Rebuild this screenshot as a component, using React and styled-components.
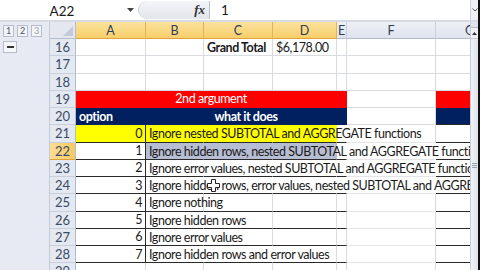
import React from "react";
import styled, { createGlobalStyle } from "styled-components";

const GlobalStyle = createGlobalStyle`
  html, body {
    margin: 0;
    padding: 0;
    background: #ffffff;
  }
  body {
    font-family: Lato, "Liberation Sans", sans-serif;
    font-size: 12.5px;
    letter-spacing: -0.45px;
    color: #1a1a1a;
  }
  * {
    box-sizing: border-box;
  }
`;

// row head, A, B, C, D, E, F, G (G runs on under the scroll bar)
const COLUMNS = "26px 70px 58px 69px 64px 10px 89px 68px";
const ROW_H = "17.25px";
const GRID = "#d8dbe0";
const DARK = "#2a2a2a";

const Window = styled.div`
  width: 480px;
  height: 270px;
  display: flex;
  overflow: hidden;
`;

const Main = styled.div`
  width: 478px;
  display: flex;
  flex-direction: column;
`;

const Edge = styled.div`
  width: 2px;
  background: #101010;
`;

const FormulaBar = styled.div`
  height: 20px;
  display: flex;
  align-items: center;
  background: #ffffff;
  font-size: 13.5px;
  letter-spacing: 0;
`;

const NameBox = styled.div`
  width: 124px;
  text-align: center;
  padding-top: 1px;
`;

const DropArrow = styled.div`
  width: 12px;
  display: flex;
  justify-content: center;
  svg {
    display: block;
  }
`;

const FxArea = styled.div`
  width: 72px;
  height: 18px;
  margin-left: 2px;
  display: flex;
  align-items: center;
  justify-content: flex-end;
  padding-right: 4px;
  border-radius: 9px 0 0 9px;
  background: linear-gradient(#f4f5f8, #e2e5ec);
  border-left: 1px solid #cfd4dd;
  border-right: 1px solid #b9bfca;
`;

const Fx = styled.span`
  font-family: "Liberation Serif", serif;
  font-style: italic;
  font-weight: bold;
  font-size: 13px;
  color: #333;
`;

const FormulaInput = styled.div`
  flex: 1;
  padding-left: 11px;
`;

const ExpandBtn = styled.div`
  width: 8px;
  height: 20px;
  display: flex;
  align-items: center;
  justify-content: center;
  background: #eef0f4;
  border-left: 1px solid #ccd1da;
`;

const Separator = styled.div`
  height: 2px;
  background: #d6dae2;
`;

const Sheet = styled.div`
  flex: 1;
  display: flex;
  overflow: hidden;
`;

const Outline = styled.div`
  width: 50px;
  background: #e7e9f3;
  border-right: 1px solid #c4c9d6;
  display: flex;
  flex-direction: column;
`;

const LevelBar = styled.div`
  height: 17px;
  display: flex;
  align-items: center;
  gap: 3px;
  padding-left: 3px;
`;

const LevelBtn = styled.div`
  width: 11px;
  height: 12px;
  border: 1px solid #b6bccb;
  background: #f3f4f8;
  font-size: 9px;
  letter-spacing: 0;
  line-height: 10px;
  text-align: center;
  color: ${(p) => (p.$dim ? "#9aa2b3" : "#4a5468")};
`;

const CollapseBtn = styled.div`
  width: 14px;
  height: 12px;
  margin: 2px 0 0 3px;
  border: 1px solid #b6bccb;
  background: #f6f7fa;
  display: flex;
  align-items: center;
  justify-content: center;
  &::before {
    content: "";
    width: 7px;
    height: 2px;
    background: #333;
  }
`;

const Grid = styled.div`
  width: 420px;
  display: flex;
  flex-direction: column;
  overflow: hidden;
`;

const HeaderRow = styled.div`
  display: grid;
  grid-template-columns: ${COLUMNS};
  height: 17px;
  flex-shrink: 0;
`;

const ColHead = styled.div`
  display: flex;
  align-items: center;
  justify-content: center;
  font-size: 12.5px;
  letter-spacing: 0;
  color: #2f3d52;
  white-space: nowrap;
  overflow: hidden;
  border-right: 1px solid ${(p) => (p.$on ? "#e0b45a" : "#c9cfdc")};
  border-bottom: 1px solid ${(p) => (p.$on ? "#e0a23a" : "#b4bccb")};
  background: ${(p) =>
    p.$on
      ? "linear-gradient(#fbe29e, #f7cf6a)"
      : "linear-gradient(#eef0f6, #dfe3ee)"};
`;

const Corner = styled.div`
  background: #e4e7ef;
  border-right: 1px solid #b4bccb;
  border-bottom: 1px solid #b4bccb;
  display: flex;
  align-items: flex-end;
  justify-content: flex-end;
  padding: 0 2px 2px 0;
`;

const Row = styled.div`
  display: grid;
  grid-template-columns: ${COLUMNS};
  grid-template-rows: ${ROW_H};
  height: ${ROW_H};
  flex-shrink: 0;
`;

const RowHead = styled.div`
  grid-column: 1;
  grid-row: 1;
  display: flex;
  align-items: center;
  padding-left: 5px;
  font-size: 13px;
  letter-spacing: 0;
  color: #3b4b66;
  background: ${(p) =>
    p.$on ? "linear-gradient(90deg, #fbdd94, #f5c963)" : "#e4e8f1"};
  border-right: 1px solid #b4bccb;
  border-bottom: 1px solid ${(p) => (p.$on ? "#e0a23a" : "#c9cfdc")};
`;

const Cell = styled.div`
  grid-column: ${(p) => p.$col} / span ${(p) => p.$span || 1};
  grid-row: 1;
  display: flex;
  align-items: center;
  justify-content: ${(p) =>
    p.$align === "right"
      ? "flex-end"
      : p.$align === "center"
      ? "center"
      : "flex-start"};
  padding: 0 ${(p) => p.$padR ?? 3}px 0 ${(p) => p.$padL ?? 3}px;
  background: ${(p) => p.$bg || "transparent"};
  color: ${(p) => p.$color || "#1a1a1a"};
  font-weight: ${(p) => (p.$bold ? 700 : 400)};
  white-space: nowrap;
  border-right: 1px solid ${(p) => p.$right || (p.$bg ? p.$bg : GRID)};
  border-bottom: 1px solid ${(p) => p.$bottom || (p.$bg ? p.$bg : GRID)};
`;

const Spill = styled.div`
  grid-column: ${(p) => p.$col} / -1;
  grid-row: 1;
  display: flex;
  align-items: center;
  padding-left: 3px;
  white-space: nowrap;
  overflow: hidden;
  color: #1a1a1a;
`;

const ScrollBar = styled.div`
  width: 8px;
  display: flex;
  flex-direction: column;
  background: #e9ebf1;
  border-left: 1px solid #c6cbd6;
`;

const ScrollTop = styled.div`
  height: 6px;
  background: #dfe3ec;
  border-bottom: 1px solid #b4bccb;
`;

const ScrollArrow = styled.div`
  height: 11px;
  display: flex;
  align-items: center;
  justify-content: center;
  background: #eef0f5;
  border-bottom: 1px solid #c6cbd6;
`;

const Thumb = styled.div`
  flex: 1;
  margin-top: 1px;
  background: linear-gradient(90deg, #f1f3f7, #dfe3ea);
  display: flex;
  align-items: center;
  justify-content: center;
  padding-top: 20px;
`;

const Grip = styled.div`
  width: 5px;
  height: 5px;
  border-top: 1px solid #9aa2b2;
  border-bottom: 1px solid #9aa2b2;
  background: linear-gradient(transparent 1px, #9aa2b2 1px, #9aa2b2 2px, transparent 2px);
`;

const Pointer = styled.svg`
  position: absolute;
  left: 207px;
  top: 179px;
`;

const ColLetters = ["A", "B", "C", "D", "E", "F", "G"];
const selectedCols = ["A", "B", "C", "D"];

// grid columns: 1 row head, 2 A, 3 B, 4 C, 5 D, 6 E, 7 F, 8 G
const options = [
  { n: 21, v: "0", text: "Ignore nested SUBTOTAL and AGGREGATE functions", fill: "#ffff00", spill: 8 },
  { n: 22, v: "1", text: "Ignore hidden rows, nested SUBTOTAL and AGGREGATE functions", fill: "#b7bdd3", spill: 9, active: true },
  { n: 23, v: "2", text: "Ignore error values, nested SUBTOTAL and AGGREGATE functions", spill: 9 },
  { n: 24, v: "3", text: "Ignore hidden rows, error values, nested SUBTOTAL and AGGREGATE functions", spill: 9 },
  { n: 25, v: "4", text: "Ignore nothing", spill: 4 },
  { n: 26, v: "5", text: "Ignore hidden rows", spill: 5 },
  { n: 27, v: "6", text: "Ignore error values", spill: 5 },
  { n: 28, v: "7", text: "Ignore hidden rows and error values", spill: 6 },
];

function OptionRow({ row }) {
  return (
    <Row>
      <RowHead $on={row.active}>{row.n}</RowHead>
      <Cell
        $col={2}
        $align="right"
        $bg={row.n === 21 ? "#ffff00" : undefined}
        $right={DARK}
        $bottom={DARK}
      >
        {row.v}
      </Cell>
      {[3, 4, 5, 6, 7, 8].map((c) => {
        const bg = row.fill && c <= 5 ? row.fill : undefined;
        let right = GRID;
        if (c < row.spill - 1 && c < 8) right = bg || "transparent";
        if (bg && c === 5) right = row.spill > 6 ? "transparent" : GRID;
        const bottom = c === 7 ? "#e4e5e8" : DARK;
        return <Cell key={c} $col={c} $bg={bg} $right={right} $bottom={bottom} />;
      })}
      <Spill $col={3}>{row.text}</Spill>
    </Row>
  );
}

function EmptyCells({ from = 2 }) {
  return [2, 3, 4, 5, 6, 7, 8]
    .filter((c) => c >= from)
    .map((c) => <Cell key={c} $col={c} />);
}

export default function App() {
  return (
    <>
      <GlobalStyle />
      <Window>
        <Main>
          <FormulaBar>
            <NameBox>A22</NameBox>
            <DropArrow>
              <svg width="7" height="4" viewBox="0 0 7 4">
                <path d="M0 0h7L3.5 4z" fill="#444" />
              </svg>
            </DropArrow>
            <FxArea>
              <Fx>fx</Fx>
            </FxArea>
            <FormulaInput>1</FormulaInput>
            <ExpandBtn>
              <svg width="6" height="4" viewBox="0 0 6 4">
                <path d="M0.5 0.5L3 3L5.5 0.5" fill="none" stroke="#555" strokeWidth="1" />
              </svg>
            </ExpandBtn>
          </FormulaBar>
          <Separator />
          <Sheet>
            <Outline>
              <LevelBar>
                <LevelBtn>1</LevelBtn>
                <LevelBtn>2</LevelBtn>
                <LevelBtn $dim>3</LevelBtn>
              </LevelBar>
              <CollapseBtn />
            </Outline>
            <Grid>
              <HeaderRow>
                <Corner>
                  <svg width="10" height="10" viewBox="0 0 10 10">
                    <path d="M10 0V10H0z" fill="#c3c9d6" />
                  </svg>
                </Corner>
                {ColLetters.map((l) => (
                  <ColHead key={l} $on={selectedCols.includes(l)}>
                    {l}
                  </ColHead>
                ))}
              </HeaderRow>

              <Row>
                <RowHead>16</RowHead>
                <Cell $col={2} />
                <Cell $col={3} />
                <Cell $col={4} $bold>
                  Grand Total
                </Cell>
                <Cell $col={5}>$6,178.00</Cell>
                <EmptyCells from={6} />
              </Row>
              <Row>
                <RowHead>17</RowHead>
                <EmptyCells />
              </Row>
              <Row>
                <RowHead>18</RowHead>
                <EmptyCells />
              </Row>

              <Row>
                <RowHead>19</RowHead>
                <Cell $col={2} $span={5} $bg="#ff0000" $color="#ffffff" $align="center">
                  2nd argument
                </Cell>
                <Cell $col={7} />
                <Cell $col={8} $bg="#ff0000" $right={GRID} />
              </Row>
              <Row>
                <RowHead>20</RowHead>
                <Cell $col={2} $bg="#002060" $color="#ffffff" $bold>
                  option
                </Cell>
                <Cell $col={3} $span={4} $bg="#002060" $color="#ffffff" $bold $align="center">
                  what it does
                </Cell>
                <Cell $col={7} />
                <Cell $col={8} $bg="#002060" $right={GRID} $bottom={DARK} />
              </Row>

              {options.map((r) => (
                <OptionRow key={r.n} row={r} />
              ))}

              <Row>
                <RowHead>29</RowHead>
                <EmptyCells />
              </Row>
            </Grid>
            <ScrollBar>
              <ScrollTop />
              <ScrollArrow>
                <svg width="5" height="3" viewBox="0 0 5 3">
                  <path d="M0 3L2.5 0L5 3z" fill="#333" />
                </svg>
              </ScrollArrow>
              <Thumb>
                <Grip />
              </Thumb>
            </ScrollBar>
          </Sheet>
        </Main>
        <Edge />
      </Window>
      <Pointer width="13" height="13" viewBox="0 0 13 13">
        <path
          d="M4.5 0.5h4v4h4v4h-4v4h-4v-4h-4v-4h4z"
          fill="#ffffff"
          stroke="#222"
          strokeWidth="1"
        />
      </Pointer>
    </>
  );
}
